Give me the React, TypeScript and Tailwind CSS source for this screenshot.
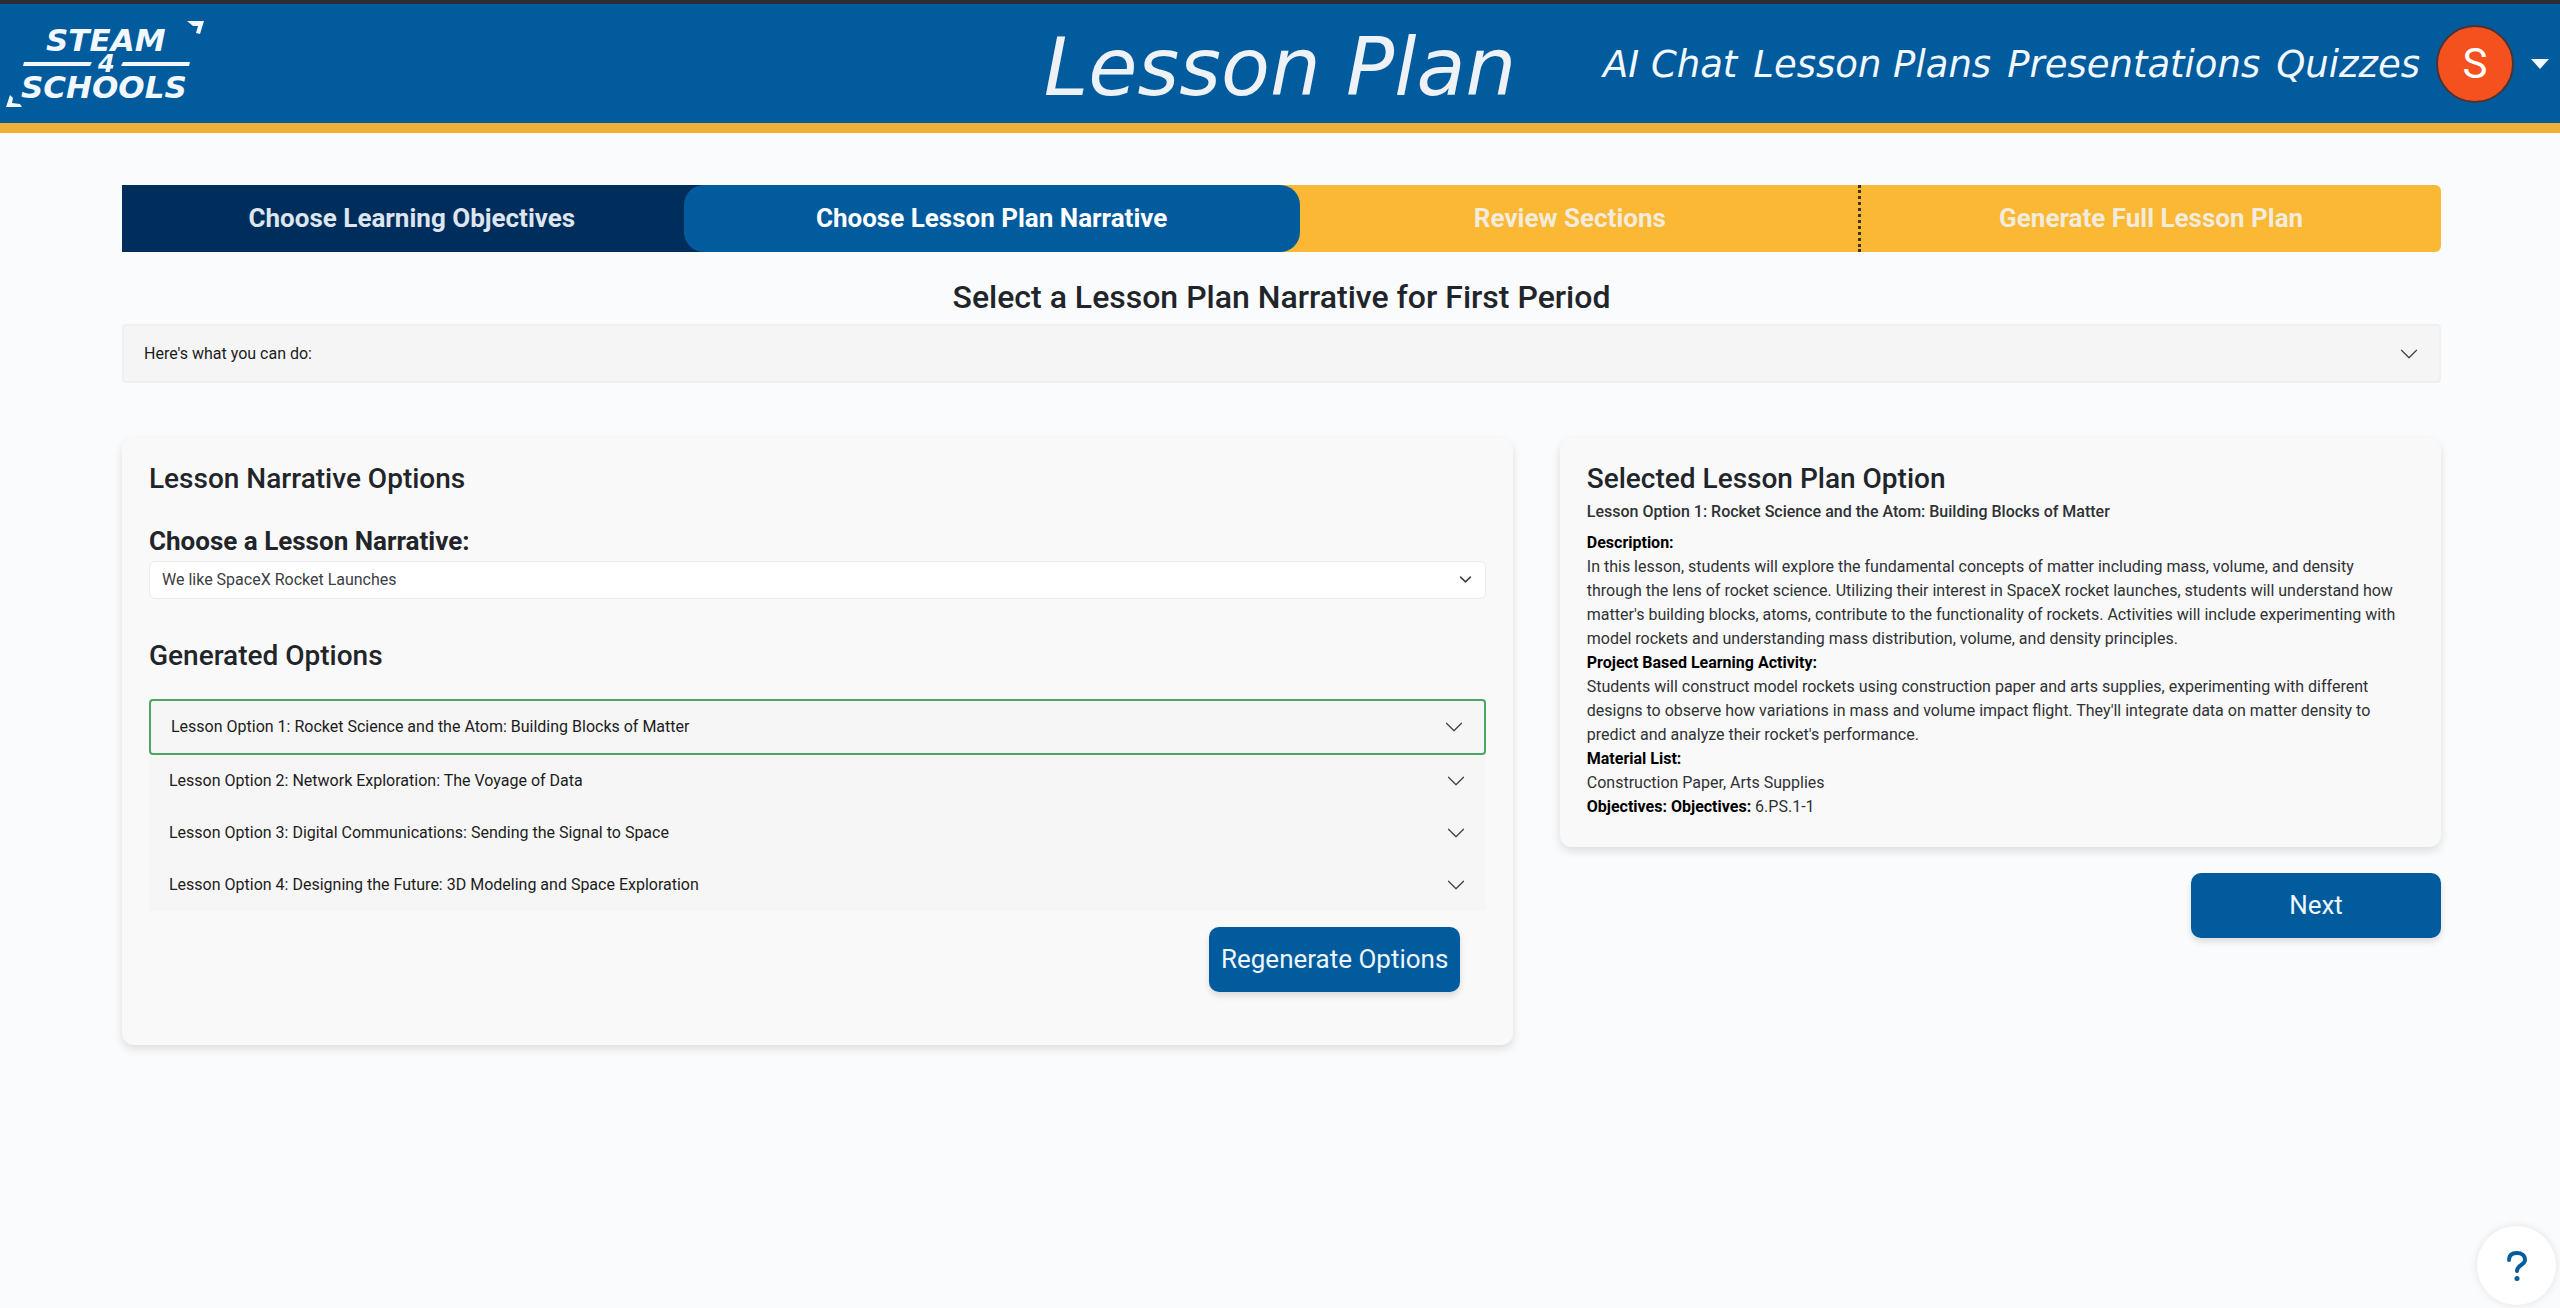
import React, { useState } from 'react';

const navLinks = ['AI Chat', 'Lesson Plans', 'Presentations', 'Quizzes'];

const lessonOptions = [
  'Lesson Option 1: Rocket Science and the Atom: Building Blocks of Matter',
  'Lesson Option 2: Network Exploration: The Voyage of Data',
  'Lesson Option 3: Digital Communications: Sending the Signal to Space',
  'Lesson Option 4: Designing the Future: 3D Modeling and Space Exploration',
];

const Chevron: React.FC = () => (
  <svg className="size-5 shrink-0" viewBox="0 0 16 16" fill="#444" aria-hidden="true">
    <path d="M1.646 4.646a.5.5 0 0 1 .708 0L8 10.293l5.646-5.647a.5.5 0 0 1 .708.708l-6 6a.5.5 0 0 1-.708 0l-6-6a.5.5 0 0 1 0-.708z" />
  </svg>
);

const Logo: React.FC = () => (
  <svg width="210" height="120" viewBox="0 0 210 120" fill="#f2f8ff" role="img" aria-label="Steam 4 Schools">
    <path d="M187 17H204L200 30L196 29L198 22H193Z" />
    <path d="M10 91L13 94L12 99L20 100L22 103H6Z" />
    <path d="M24 58H92L90 62H23Z" />
    <path d="M123 58H190L189 62H121Z" />
    <g fontFamily="'DejaVu Sans', sans-serif" fontWeight="bold" fontStyle="italic">
      <text x="46" y="47" fontSize="31">STEAM</text>
      <text x="98" y="68" fontSize="24">4</text>
      <text x="21" y="94" fontSize="31">SCHOOLS</text>
    </g>
  </svg>
);

const Header: React.FC = () => (
  <header className="border-t-4 border-[#2a2d35] bg-[#015b9c] font-['DejaVu_Sans',sans-serif] italic">
    <div className="grid h-[119px] grid-cols-[1fr_auto_1fr] items-center">
      <a href="#"><Logo /></a>
      <h1 className="pt-2 text-[80px] leading-none text-[#eef1f6]">Lesson Plan</h1>
      <nav className="flex items-center justify-end gap-4 pr-[10px]">
        {navLinks.map((link) => (
          <a key={link} href="#" className="whitespace-nowrap text-[37px] leading-none text-[#f2f8ff]">{link}</a>
        ))}
        <button className="flex items-center gap-4" aria-label="Account menu">
          <span className="flex size-[78px] items-center justify-center rounded-full border-2 border-[#4a3436] bg-[#f4511e] font-[Roboto,sans-serif] text-[42px] leading-none text-white not-italic">
            S
          </span>
          <svg width="20" height="10" viewBox="0 0 20 10" fill="#f2f8ff" aria-hidden="true">
            <path d="M1 0H19L10 10Z" />
          </svg>
        </button>
      </nav>
    </div>
    <div className="h-[10px] bg-[#ebb035]"></div>
  </header>
);

const Steps: React.FC = () => (
  <ol className="grid h-[67px] grid-cols-4 text-center text-[26px] leading-[67px] font-bold">
    <li className="bg-[#002e5c] text-[#dfe5ee]">Choose Learning Objectives</li>
    {/* the current step overlaps its neighbours, so they carry on behind its round corners */}
    <li className="grid grid-cols-2 bg-[linear-gradient(to_right,#002e5c_50%,#fab834_50%)]" aria-current="step">
      <span className="z-10 col-span-2 -mx-[18px] rounded-[20px] bg-[#015b9c] text-white">Choose Lesson Plan Narrative</span>
    </li>
    <li className="border-r-[3px] border-dotted border-[#3c3524] bg-[#fab834] text-[#f3ebdb]">Review Sections</li>
    <li className="rounded-r-md bg-[#fab834] text-[#f3ebdb]">Generate Full Lesson Plan</li>
  </ol>
);

const NarrativeOptions: React.FC = () => {
  const [selected, setSelected] = useState(0);

  return (
    <section className="w-[60%] rounded-xl bg-[#f9f9f9] px-[27px] pt-6 pb-[53px] shadow-[0_4px_10px_rgba(0,0,0,0.12)]">
      <h3 className="text-[28px] leading-[34px] font-medium">Lesson Narrative Options</h3>
      <label htmlFor="narrative" className="mt-7 block text-[26px] leading-[34px] font-bold">
        Choose a Lesson Narrative:
      </label>
      <div className="relative mt-[3px]">
        <select id="narrative" className="h-[38px] w-full appearance-none rounded-md border border-[#e9ebed] bg-white px-3 text-[16px] text-[#3b3e42]">
          <option>We like SpaceX Rocket Launches</option>
        </select>
        <svg className="pointer-events-none absolute top-3 right-[14px]" width="13" height="13" viewBox="0 0 16 16" fill="none" stroke="#444" strokeWidth="2" strokeLinecap="round" strokeLinejoin="round" aria-hidden="true">
          <path d="m2 5 6 6 6-6" />
        </svg>
      </div>
      <h3 className="mt-10 text-[28px] leading-[34px] font-medium">Generated Options</h3>
      <div className="mt-[26px]">
        {lessonOptions.map((option, index) => (
          <button
            key={option}
            onClick={() => setSelected(index)}
            className={`flex w-full items-center justify-between bg-[#f6f6f6] px-5 text-left text-[16px] leading-6 text-[#1c1c1c] ${
              index === selected ? 'h-14 rounded-sm border-2 border-[#4fa564]' : 'h-[52px]'
            }`}
          >
            {option}
            <Chevron />
          </button>
        ))}
      </div>
      <div className="mt-4 flex justify-end pr-[26px]">
        <button className="h-[65px] rounded-[10px] bg-[#015b9c] px-3 text-[26px] text-[#eef6fd] shadow-[0_4px_6px_rgba(0,0,0,0.12)]">
          Regenerate Options
        </button>
      </div>
    </section>
  );
};

const SelectedOption: React.FC = () => (
  <section className="rounded-xl bg-[#f9f9f9] pt-6 pr-[37px] pb-7 pl-[27px] text-[16px] leading-6 text-[#2f3134] shadow-[0_4px_10px_rgba(0,0,0,0.12)]">
    <h3 className="text-[28px] leading-[34px] font-medium text-[#212529]">Selected Lesson Plan Option</h3>
    <h4 className="mt-1 font-medium">{lessonOptions[0]}</h4>
    <div className="mt-[7px]">
      <h5 className="font-bold text-black">Description:</h5>
      <p>
        In this lesson, students will explore the fundamental concepts of matter including mass, volume, and density
        through the lens of rocket science. Utilizing their interest in SpaceX rocket launches, students will understand
        how matter's building blocks, atoms, contribute to the functionality of rockets. Activities will include
        experimenting with model rockets and understanding mass distribution, volume, and density principles.
      </p>
      <h5 className="font-bold text-black">Project Based Learning Activity:</h5>
      <p>
        Students will construct model rockets using construction paper and arts supplies, experimenting with different
        designs to observe how variations in mass and volume impact flight. They'll integrate data on matter density to
        predict and analyze their rocket's performance.
      </p>
      <h5 className="font-bold text-black">Material List:</h5>
      <p>Construction Paper, Arts Supplies</p>
      <p><strong className="font-bold text-black">Objectives: Objectives:</strong> 6.PS.1-1</p>
    </div>
  </section>
);

const App: React.FC = () => {
  return (
    <div className="min-h-screen bg-[#f9fbfd] font-[Roboto,sans-serif] text-[#212529]">
      <Header />
      <main className="pt-[52px] pr-[119px] pl-[122px]">
        <Steps />
        <h2 className="mt-[26px] text-center text-[32px] leading-[38px] font-medium">
          Select a Lesson Plan Narrative for First Period
        </h2>
        <button className="mt-2 flex h-[59px] w-full items-center justify-between rounded-sm border-2 border-[#eff0f1] bg-[#f5f5f5] px-5 text-[16px] text-[#1c1c1c]">
          Here's what you can do:
          <Chevron />
        </button>
        <div className="mt-[55px] flex items-start justify-between">
          <NarrativeOptions />
          <div className="flex w-[38%] flex-col">
            <SelectedOption />
            <button className="mt-[26px] h-[65px] w-[250px] self-end rounded-[10px] bg-[#015b9c] text-[26px] text-[#eef6fd] shadow-[0_4px_6px_rgba(0,0,0,0.12)]">
              Next
            </button>
          </div>
        </div>
      </main>
      <button className="fixed right-1 bottom-[3px] flex size-[79px] items-center justify-center rounded-full bg-white shadow-[0_0_8px_rgba(0,0,0,0.1)]" aria-label="Help">
        <svg width="22" height="32" viewBox="0 0 22 32" fill="none" stroke="#015b9c" strokeWidth="4" strokeLinecap="round" aria-hidden="true">
          <path d="M3 10C3 5 6.500 3 11 3S19 5.500 19 10C19 15 11 15 11 21" />
          <circle cx="11" cy="28.500" r="2.500" fill="#015b9c" stroke="none" />
        </svg>
      </button>
    </div>
  );
};

export default App;
